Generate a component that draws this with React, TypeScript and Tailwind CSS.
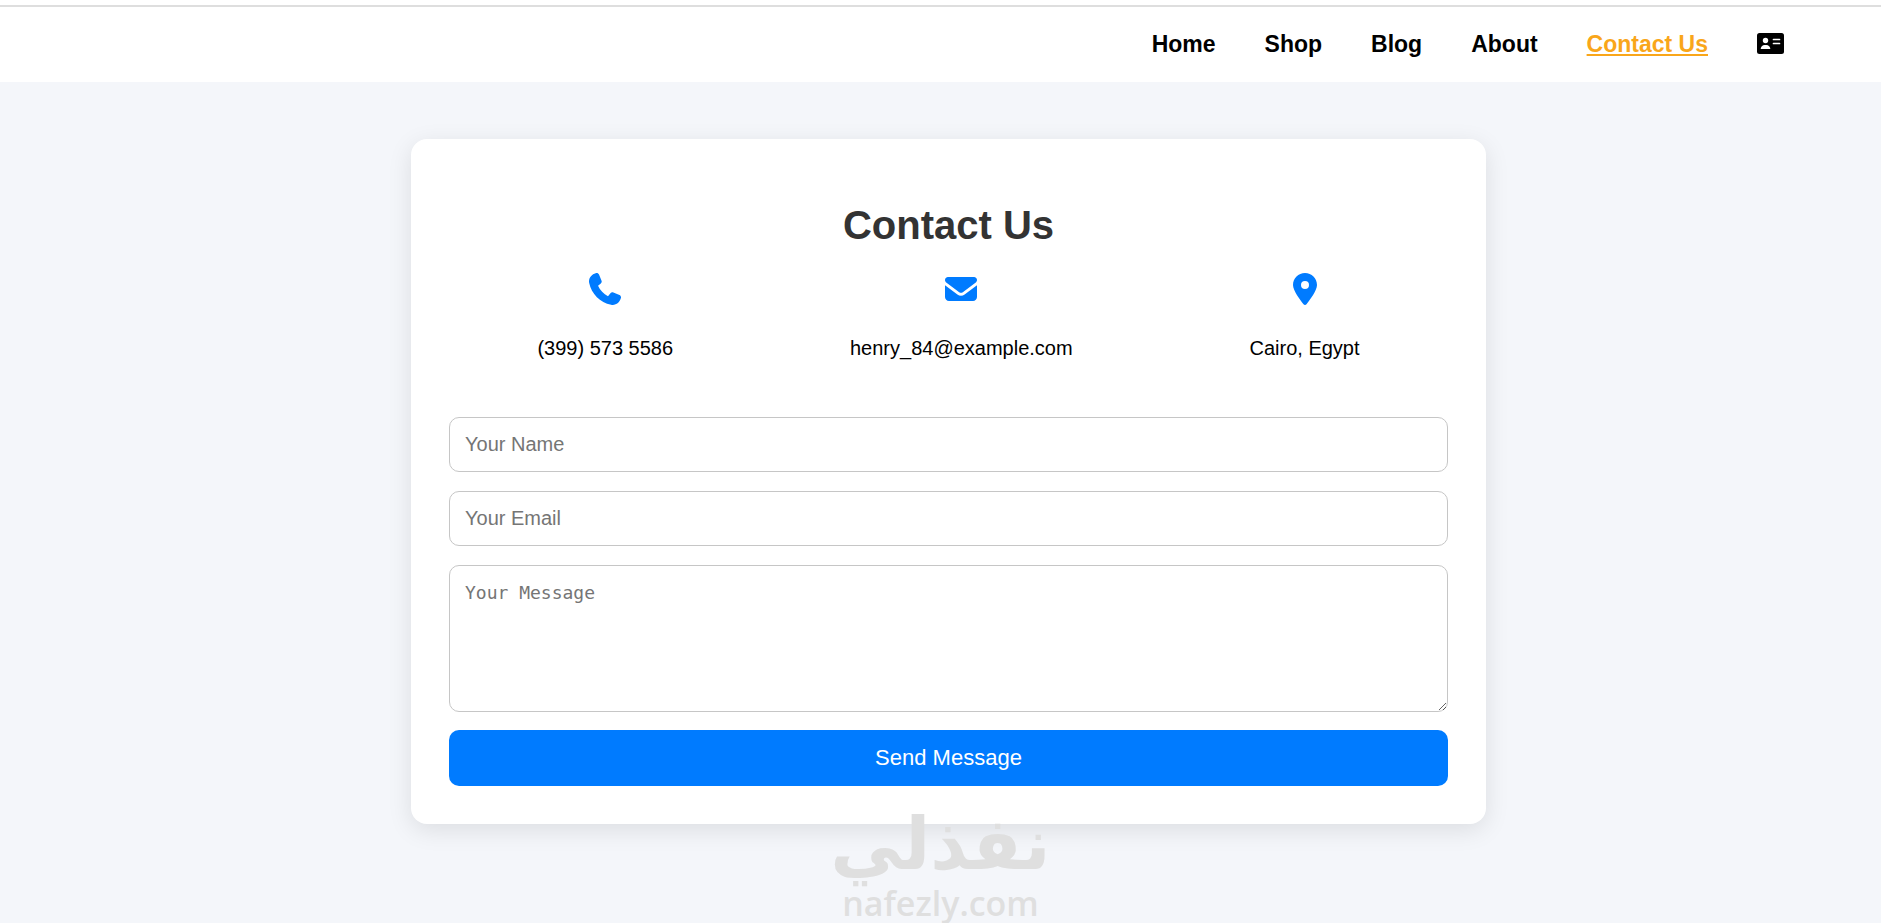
import { FaLocationDot } from "react-icons/fa6";

const links = [
  { label: "Home", href: "#home" },
  { label: "Shop", href: "#shop" },
  { label: "Blog", href: "#blog" },
  { label: "About", href: "#about" },
  { label: "Contact Us", href: "#contact", active: true },
];

type IconProps = { className?: string };

function PhoneIcon({ className }: IconProps) {
  return (
    <svg viewBox="0 0 512 512" fill="currentColor" className={className} aria-hidden="true">
      <path d="M160.2 25C152.3 6.1 131.7-3.9 112.1 1.4l-5.5 1.500c-64.600 17.600-119.800 80.200-103.700 156.400 37.100 175 174.800 312.700 349.800 349.800 76.300 16.200 138.800-39.100 156.400-103.700l1.500-5.500c5.400-19.700-4.700-40.300-23.500-48.100l-97.300-40.500c-16.500-6.900-35.600-2.100-47 11.800l-38.600 47.200C233.900 335.400 177.300 277 144.800 205.300L189 169.300c13.900-11.300 18.600-30.400 11.800-47L160.200 25z" />
    </svg>
  );
}

function EnvelopeIcon({ className }: IconProps) {
  return (
    <svg viewBox="0 0 512 512" fill="currentColor" className={className} aria-hidden="true">
      <path d="M48 64c-26.500 0-48 21.500-48 48 0 15.100 7.100 29.300 19.200 38.400l208 156c17.100 12.800 40.500 12.800 57.600 0l208-156c12.100-9.100 19.200-23.300 19.200-38.400 0-26.500-21.500-48-48-48L48 64zM0 196L0 384c0 35.300 28.700 64 64 64l384 0c35.300 0 64-28.700 64-64l0-188-198.400 148.800c-34.100 25.600-81.100 25.600-115.200 0L0 196z" />
    </svg>
  );
}

function CardIcon() {
  return (
    <svg viewBox="0 0 27 21" className="h-[21px] w-[27px]" aria-hidden="true">
      <rect width="27" height="21" rx="2.5" fill="#000" />
      <circle cx="8.5" cy="7.5" r="2.700" fill="#fff" />
      <path d="M3.700 16c0-2.300 1.700-4 4-4h1.600c2.300 0 4 1.700 4 4z" fill="#fff" />
      <path d="M16.500 6.500h6M16.500 10.500h6" stroke="#fff" strokeWidth="1.700" strokeLinecap="round" />
    </svg>
  );
}

const details = [
  { text: "(399) 573 5586", Icon: PhoneIcon },
  { text: "henry_84@example.com", Icon: EnvelopeIcon },
  { text: "Cairo, Egypt", Icon: FaLocationDot },
];

const fieldClass =
  "block w-full rounded-[10px] border border-[#c6c6c6] bg-white px-[15px] text-black outline-none placeholder:text-[#757575]";

function Navbar() {
  return (
    <header className="bg-white pt-[5px]">
      <nav className="flex h-[77px] items-center justify-end gap-[49px] border-t-2 border-[#dedede] pr-[97px] pb-0.5">
        {links.map((link) => (
          <a
            key={link.label}
            href={link.href}
            className={
              link.active
                ? "text-[23px] leading-7 font-bold text-[#f9a61a] underline"
                : "text-[23px] leading-7 font-bold text-black"
            }
          >
            {link.label}
          </a>
        ))}
        <a href="#card" aria-label="Contact card">
          <CardIcon />
        </a>
      </nav>
    </header>
  );
}

function ContactCard() {
  return (
    <section className="w-full max-w-[1075px] rounded-2xl bg-white p-[38px] shadow-[0_6px_25px_rgba(0,0,0,0.1)]">
      <h1 className="pt-6 text-center text-[40px] leading-12 font-bold text-[#333]">Contact Us</h1>

      <div className="mt-6 flex justify-around">
        {details.map(({ text, Icon }) => (
          <div key={text} className="flex flex-col items-center">
            <Icon className="size-8 text-[#007bff]" aria-hidden="true" />
            <p className="mt-[31px] text-xl leading-6 text-black">{text}</p>
          </div>
        ))}
      </div>

      <form className="mt-[57px]" onSubmit={(e) => e.preventDefault()}>
        <input
          type="text"
          aria-label="Your Name"
          placeholder="Your Name"
          className={`${fieldClass} h-[55px] text-xl`}
        />
        <input
          type="email"
          aria-label="Your Email"
          placeholder="Your Email"
          className={`${fieldClass} mt-[19px] h-[55px] text-xl`}
        />
        <textarea
          aria-label="Your Message"
          placeholder="Your Message"
          className={`${fieldClass} mt-[19px] h-[147px] resize-y py-[15px] font-['DejaVu_Sans_Mono',monospace] text-lg leading-6`}
        />
        <button
          type="submit"
          className="mt-[18px] block h-14 w-full rounded-[10px] bg-[#007bff] pb-0.5 text-[22px] text-white"
        >
          Send Message
        </button>
      </form>
    </section>
  );
}

function Watermark() {
  return (
    <div
      className="pointer-events-none absolute inset-x-0 bottom-0 flex flex-col items-center text-[#dfdfdf]"
      aria-hidden="true"
    >
      <span
        lang="ar"
        dir="rtl"
        className="font-['DejaVu_Sans',sans-serif] text-[72px] leading-[78px] font-bold"
      >
        نفذلي
      </span>
      <span className="font-['Open_Sans',sans-serif] text-[34px] leading-10 font-semibold">nafezly.com</span>
    </div>
  );
}

export default function App() {
  return (
    <div className="relative flex min-h-screen flex-col bg-[#f4f6fa] font-['Liberation_Sans',Arial,sans-serif]">
      <Navbar />
      <main className="flex justify-center pt-[57px] pb-24 pl-4">
        <ContactCard />
      </main>
      <Watermark />
    </div>
  );
}
